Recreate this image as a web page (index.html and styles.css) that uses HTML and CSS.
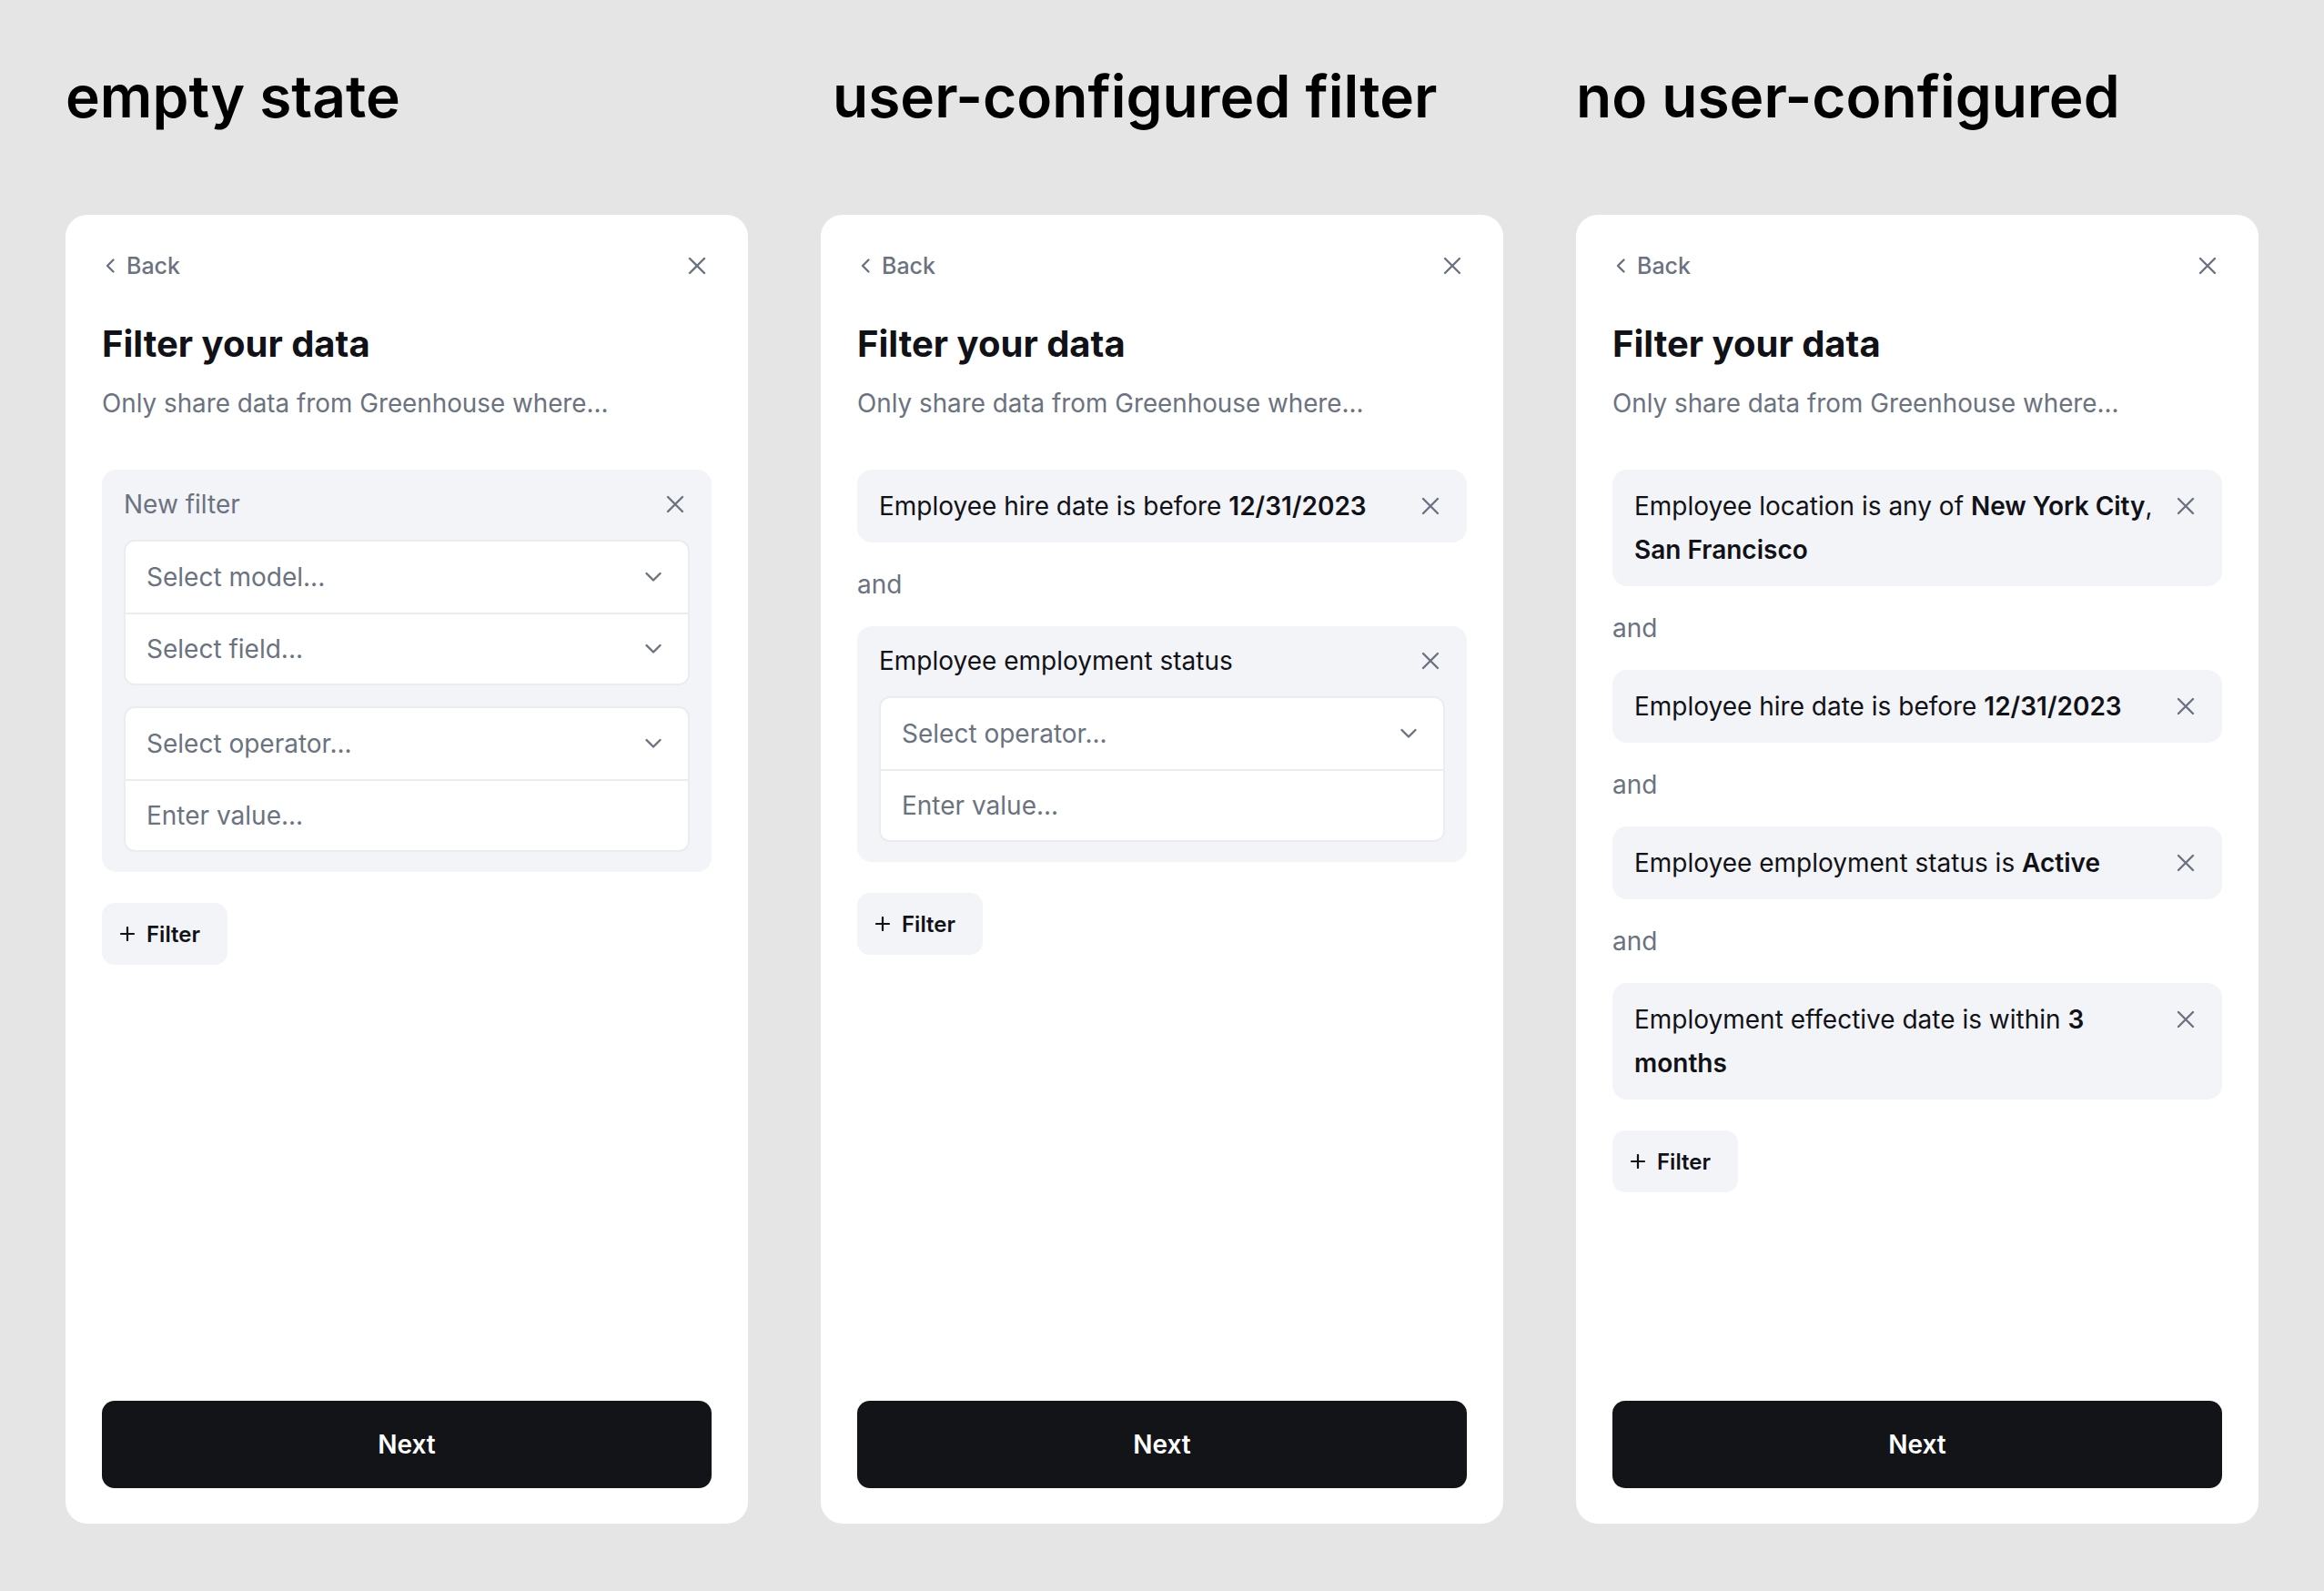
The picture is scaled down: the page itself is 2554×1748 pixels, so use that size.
FILE: index.html
```html
<!DOCTYPE html>
<html lang="en">
<head>
<meta charset="utf-8">
<title>Filter your data</title>
<link rel="stylesheet" href="styles.css">
</head>
<body>
<main class="board">

  <section class="column">
    <h1 class="column-title">empty state</h1>
    <div class="panel">
      <div class="topbar">
        <span class="back">
          <svg class="back-icon" viewBox="0 0 14 18" width="14" height="18"><path d="M10.5 2.5 L4 9 L10.5 15.5"/></svg>
          Back
        </span>
        <span class="icon-btn">
          <svg class="x-icon" viewBox="0 0 20 20" width="20" height="20"><path d="M2 2 L18 18 M18 2 L2 18"/></svg>
        </span>
      </div>
      <h2 class="panel-title">Filter your data</h2>
      <p class="panel-sub">Only share data from Greenhouse where...</p>

      <div class="filter-list">
        <div class="filter-box">
          <div class="box-head">
            <span class="box-label muted">New filter</span>
            <span class="icon-btn">
              <svg class="x-icon" viewBox="0 0 20 20" width="20" height="20"><path d="M2 2 L18 18 M18 2 L2 18"/></svg>
            </span>
          </div>
          <div class="field-group">
            <div class="field">
              <span>Select model...</span>
              <svg class="chev" viewBox="0 0 20 12" width="20" height="12"><path d="M2.5 2 L10 9.5 L17.5 2"/></svg>
            </div>
            <div class="field">
              <span>Select field...</span>
              <svg class="chev" viewBox="0 0 20 12" width="20" height="12"><path d="M2.5 2 L10 9.5 L17.5 2"/></svg>
            </div>
          </div>
          <div class="field-group">
            <div class="field">
              <span>Select operator...</span>
              <svg class="chev" viewBox="0 0 20 12" width="20" height="12"><path d="M2.5 2 L10 9.5 L17.5 2"/></svg>
            </div>
            <div class="field">
              <span>Enter value...</span>
            </div>
          </div>
        </div>
      </div>

      <button class="add-btn" type="button">
        <svg class="plus" viewBox="0 0 16 16" width="16" height="16"><path d="M8 1 V15 M1 8 H15"/></svg>
        Filter
      </button>

      <button class="next-btn" type="button">Next</button>
    </div>
  </section>

  <section class="column">
    <h1 class="column-title shifted">user-configured filter</h1>
    <div class="panel">
      <div class="topbar">
        <span class="back">
          <svg class="back-icon" viewBox="0 0 14 18" width="14" height="18"><path d="M10.5 2.5 L4 9 L10.5 15.5"/></svg>
          Back
        </span>
        <span class="icon-btn">
          <svg class="x-icon" viewBox="0 0 20 20" width="20" height="20"><path d="M2 2 L18 18 M18 2 L2 18"/></svg>
        </span>
      </div>
      <h2 class="panel-title">Filter your data</h2>
      <p class="panel-sub">Only share data from Greenhouse where...</p>

      <div class="filter-list">
        <div class="chip">
          <span class="chip-text">Employee hire date is before <b>12/31/2023</b></span>
          <span class="icon-btn">
            <svg class="x-icon" viewBox="0 0 20 20" width="20" height="20"><path d="M2 2 L18 18 M18 2 L2 18"/></svg>
          </span>
        </div>
        <div class="joiner">and</div>
        <div class="filter-box">
          <div class="box-head">
            <span class="box-label">Employee employment status</span>
            <span class="icon-btn">
              <svg class="x-icon" viewBox="0 0 20 20" width="20" height="20"><path d="M2 2 L18 18 M18 2 L2 18"/></svg>
            </span>
          </div>
          <div class="field-group">
            <div class="field">
              <span>Select operator...</span>
              <svg class="chev" viewBox="0 0 20 12" width="20" height="12"><path d="M2.5 2 L10 9.5 L17.5 2"/></svg>
            </div>
            <div class="field">
              <span>Enter value...</span>
            </div>
          </div>
        </div>
      </div>

      <button class="add-btn" type="button">
        <svg class="plus" viewBox="0 0 16 16" width="16" height="16"><path d="M8 1 V15 M1 8 H15"/></svg>
        Filter
      </button>

      <button class="next-btn" type="button">Next</button>
    </div>
  </section>

  <section class="column">
    <h1 class="column-title">no user-configured</h1>
    <div class="panel">
      <div class="topbar">
        <span class="back">
          <svg class="back-icon" viewBox="0 0 14 18" width="14" height="18"><path d="M10.5 2.5 L4 9 L10.5 15.5"/></svg>
          Back
        </span>
        <span class="icon-btn">
          <svg class="x-icon" viewBox="0 0 20 20" width="20" height="20"><path d="M2 2 L18 18 M18 2 L2 18"/></svg>
        </span>
      </div>
      <h2 class="panel-title">Filter your data</h2>
      <p class="panel-sub">Only share data from Greenhouse where...</p>

      <div class="filter-list">
        <div class="chip">
          <span class="chip-text">Employee location is any of <b>New York City</b>, <b>San Francisco</b></span>
          <span class="icon-btn">
            <svg class="x-icon" viewBox="0 0 20 20" width="20" height="20"><path d="M2 2 L18 18 M18 2 L2 18"/></svg>
          </span>
        </div>
        <div class="joiner">and</div>
        <div class="chip">
          <span class="chip-text">Employee hire date is before <b>12/31/2023</b></span>
          <span class="icon-btn">
            <svg class="x-icon" viewBox="0 0 20 20" width="20" height="20"><path d="M2 2 L18 18 M18 2 L2 18"/></svg>
          </span>
        </div>
        <div class="joiner">and</div>
        <div class="chip">
          <span class="chip-text">Employee employment status is <b>Active</b></span>
          <span class="icon-btn">
            <svg class="x-icon" viewBox="0 0 20 20" width="20" height="20"><path d="M2 2 L18 18 M18 2 L2 18"/></svg>
          </span>
        </div>
        <div class="joiner">and</div>
        <div class="chip">
          <span class="chip-text">Employment effective date is within <b>3 months</b></span>
          <span class="icon-btn">
            <svg class="x-icon" viewBox="0 0 20 20" width="20" height="20"><path d="M2 2 L18 18 M18 2 L2 18"/></svg>
          </span>
        </div>
      </div>

      <button class="add-btn" type="button">
        <svg class="plus" viewBox="0 0 16 16" width="16" height="16"><path d="M8 1 V15 M1 8 H15"/></svg>
        Filter
      </button>

      <button class="next-btn" type="button">Next</button>
    </div>
  </section>

</main>
</body>
</html>
```

FILE: styles.css
```css
* {
  box-sizing: border-box;
}

html, body {
  margin: 0;
  padding: 0;
}

body {
  background: #e5e5e5;
  font-family: Inter, "Noto Sans", "Liberation Sans", sans-serif;
  color: #111217;
  width: 2554px;
  height: 1748px;
  overflow: hidden;
}

.board {
  display: flex;
  gap: 80px;
  padding: 66px 0 0 72px;
}

.column {
  width: 750px;
  display: flex;
  flex-direction: column;
}

.column-title {
  margin: 0 0 90px 0;
  font-size: 64px;
  line-height: 80px;
  font-weight: 600;
  color: #000;
  letter-spacing: 0;
  white-space: nowrap;
}

.column-title.shifted {
  padding-left: 13px;
}

.panel {
  height: 1438px;
  background: #fff;
  border-radius: 24px;
  padding: 40px 40px 39px;
  display: flex;
  flex-direction: column;
}

.topbar {
  height: 32px;
  display: flex;
  align-items: center;
  justify-content: space-between;
}

.back {
  display: flex;
  align-items: center;
  gap: 11px;
  padding-left: 2px;
  font-size: 25px;
  font-weight: 500;
  color: #6b7280;
}

.back-icon path,
.x-icon path,
.chev path {
  fill: none;
  stroke: #6b7280;
  stroke-width: 2.4;
  stroke-linecap: round;
  stroke-linejoin: round;
}

.icon-btn {
  width: 32px;
  height: 32px;
  flex: none;
  display: flex;
  align-items: center;
  justify-content: center;
}

.panel-title {
  margin: 46px 0 0 0;
  font-size: 40px;
  line-height: 48px;
  font-weight: 700;
  color: #111217;
}

.panel-sub {
  margin: 21px 0 0 0;
  font-size: 27.8px;
  line-height: 40px;
  color: #6b7280;
}

.filter-list {
  margin-top: 53px;
  display: flex;
  flex-direction: column;
  gap: 26px;
}

.joiner {
  font-size: 28px;
  line-height: 40px;
  color: #6b7280;
}

.chip {
  background: #f3f4f7;
  border-radius: 16px;
  padding: 16px 24px;
  display: flex;
  align-items: flex-start;
  gap: 12px;
}

.chip-text {
  flex: 1;
  font-size: 28px;
  line-height: 48px;
  color: #111217;
}

.chip-text b {
  font-weight: 600;
}

.chip .icon-btn {
  margin-top: 8px;
}

.filter-box {
  background: #f3f4f7;
  border-radius: 16px;
  padding: 22px 24px;
  display: flex;
  flex-direction: column;
  gap: 23px;
}

.box-head {
  height: 32px;
  display: flex;
  align-items: center;
  justify-content: space-between;
}

.box-label {
  font-size: 28px;
  line-height: 32px;
  color: #111217;
}

.box-label.muted {
  color: #6b7280;
}

.field-group {
  background: #fff;
  border: 2px solid #eaecf0;
  border-radius: 12px;
  display: flex;
  flex-direction: column;
}

.field {
  height: 78px;
  display: flex;
  align-items: center;
  justify-content: space-between;
  padding: 0 28px 0 23px;
  font-size: 28px;
  color: #6b7280;
}

.field + .field {
  border-top: 2px solid #eaecf0;
}

.add-btn {
  align-self: flex-start;
  margin-top: 34px;
  height: 68px;
  padding: 0 30px 0 20px;
  border: none;
  border-radius: 14px;
  background: #f3f4f7;
  display: flex;
  align-items: center;
  gap: 13px;
  font-family: inherit;
  font-size: 24px;
  font-weight: 600;
  color: #111217;
}

.plus path {
  fill: none;
  stroke: #111217;
  stroke-width: 2.2;
  stroke-linecap: round;
}

.next-btn {
  margin-top: auto;
  height: 96px;
  border: none;
  border-radius: 14px;
  background: #131418;
  color: #fff;
  font-family: inherit;
  font-size: 28px;
  font-weight: 600;
}
```
